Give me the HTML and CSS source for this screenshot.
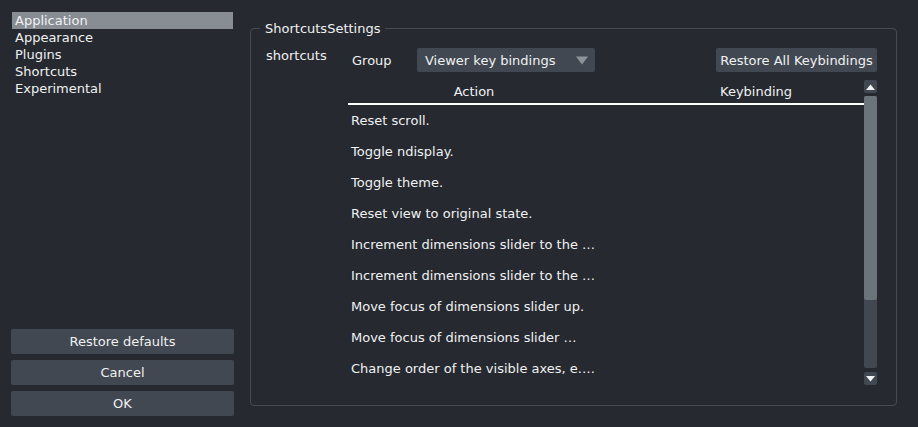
FILE: index.html
```html
<!DOCTYPE html>
<html>
<head>
<meta charset="utf-8">
<link rel="stylesheet" href="styles.css">
</head>
<body>
<div class="dialog">
  <div class="sidebar">
    <ul class="nav">
      <li class="nav-item selected">Application</li>
      <li class="nav-item">Appearance</li>
      <li class="nav-item">Plugins</li>
      <li class="nav-item">Shortcuts</li>
      <li class="nav-item">Experimental</li>
    </ul>
    <div class="actions">
      <button class="btn">Restore defaults</button>
      <button class="btn">Cancel</button>
      <button class="btn">OK</button>
    </div>
  </div>
  <fieldset class="group">
    <legend class="group-title">ShortcutsSettings</legend>
    <div class="group-body">
      <div class="field-label">shortcuts</div>
      <div class="editor">
        <div class="toolbar">
          <span class="toolbar-label">Group</span>
          <div class="combo">
            <span>Viewer key bindings</span>
            <svg class="combo-arrow" width="12" height="9" viewBox="0 0 12 9"><path d="M0 0.5 H12 L6 8.5 Z" fill="#8e949a"/></svg>
          </div>
          <div class="spacer"></div>
          <button class="btn btn-restore">Restore All Keybindings</button>
        </div>
        <div class="table">
          <div class="table-main">
            <div class="thead">
              <div class="th th-action">Action</div>
              <div class="th th-key">Keybinding</div>
            </div>
            <div class="row"><div class="cell">Reset scroll.</div></div>
            <div class="row"><div class="cell">Toggle ndisplay.</div></div>
            <div class="row"><div class="cell">Toggle theme.</div></div>
            <div class="row"><div class="cell">Reset view to original state.</div></div>
            <div class="row"><div class="cell">Increment dimensions slider to the …</div></div>
            <div class="row"><div class="cell">Increment dimensions slider to the …</div></div>
            <div class="row"><div class="cell">Move focus of dimensions slider up.</div></div>
            <div class="row"><div class="cell">Move focus of dimensions slider …</div></div>
            <div class="row"><div class="cell">Change order of the visible axes, e.…</div></div>
          </div>
          <div class="scrollbar">
            <div class="sb-btn">
              <svg width="9" height="6" viewBox="0 0 9 6"><path d="M0 6 H9 L4.5 0.5 Z" fill="#f0f1f2"/></svg>
            </div>
            <div class="sb-track"><div class="sb-handle"></div></div>
            <div class="sb-btn">
              <svg width="9" height="6" viewBox="0 0 9 6"><path d="M0 0 H9 L4.5 5.5 Z" fill="#f0f1f2"/></svg>
            </div>
          </div>
        </div>
      </div>
    </div>
  </fieldset>
</div>
</body>
</html>
```

FILE: styles.css
```css
* { box-sizing: border-box; }
html, body {
  margin: 0;
  padding: 0;
  background: #262930;
}
body {
  font-family: "DejaVu Sans", sans-serif;
  font-size: 13px;
  color: #f0f1f2;
}
.dialog {
  display: flex;
  width: 918px;
  height: 427px;
  padding: 12px 21px 11px 11px;
  gap: 16px;
}
.sidebar {
  width: 223px;
  display: flex;
  flex-direction: column;
  justify-content: space-between;
}
.nav {
  list-style: none;
  margin: 0 1px;
  padding: 0;
}
.nav-item {
  height: 17px;
  line-height: 17px;
  padding-left: 3px;
  white-space: nowrap;
}
.nav-item.selected {
  background: #878d93;
}
.actions {
  display: flex;
  flex-direction: column;
  gap: 6px;
}
.btn {
  font-family: "DejaVu Sans", sans-serif;
  font-size: 13px;
  color: #f0f1f2;
  background: #414851;
  border: none;
  border-radius: 2px;
  height: 25px;
  padding: 0;
  margin: 0;
  white-space: nowrap;
}
.group {
  flex: 1;
  margin: 9px 0 10px 0;
  border: 1px solid #454a53;
  border-radius: 4px;
  padding: 12px 19px 19px 9px;
  min-width: 0;
}
.group-title {
  padding: 0 5px;
  line-height: 15px;
}
.group-body {
  display: flex;
  padding-left: 6px;
}
.field-label {
  width: 82px;
  line-height: 15px;
}
.editor {
  flex: 1;
  display: flex;
  flex-direction: column;
}
.toolbar {
  display: flex;
  align-items: center;
  height: 24px;
}
.toolbar-label {
  width: 69px;
  padding-left: 4px;
}
.combo {
  width: 178px;
  height: 24px;
  background: #414851;
  border-radius: 2px;
  display: flex;
  align-items: center;
  justify-content: space-between;
  padding: 0 7px 0 8px;
}
.combo-arrow {
  display: block;
}
.spacer { flex: 1; }
.btn-restore {
  width: 161px;
  height: 24px;
  padding: 0 4px;
}
.table {
  display: flex;
  margin-top: 8px;
}
.table-main {
  flex: 1;
}
.thead {
  display: flex;
  height: 25px;
  border-bottom: 2px solid #ffffff;
  line-height: 23px;
}
.th-action {
  width: 252px;
  text-align: center;
}
.th-key {
  padding-left: 120px;
}
.row {
  height: 31px;
  line-height: 31px;
}
.cell {
  width: 252px;
  padding-left: 3px;
  white-space: nowrap;
  overflow: hidden;
}
.scrollbar {
  width: 13px;
  display: flex;
  flex-direction: column;
  height: 305px;
}
.sb-btn {
  height: 13px;
  background: #414851;
  border-radius: 2px;
  display: flex;
  align-items: center;
  justify-content: center;
}
.sb-btn svg { display: block; }
.sb-track {
  height: 272px;
  margin: 3px 0 4px 0;
  background: #414851;
  border-radius: 2px;
}
.sb-handle {
  height: 204px;
  background: #6b737b;
  border-radius: 2px;
}
```
